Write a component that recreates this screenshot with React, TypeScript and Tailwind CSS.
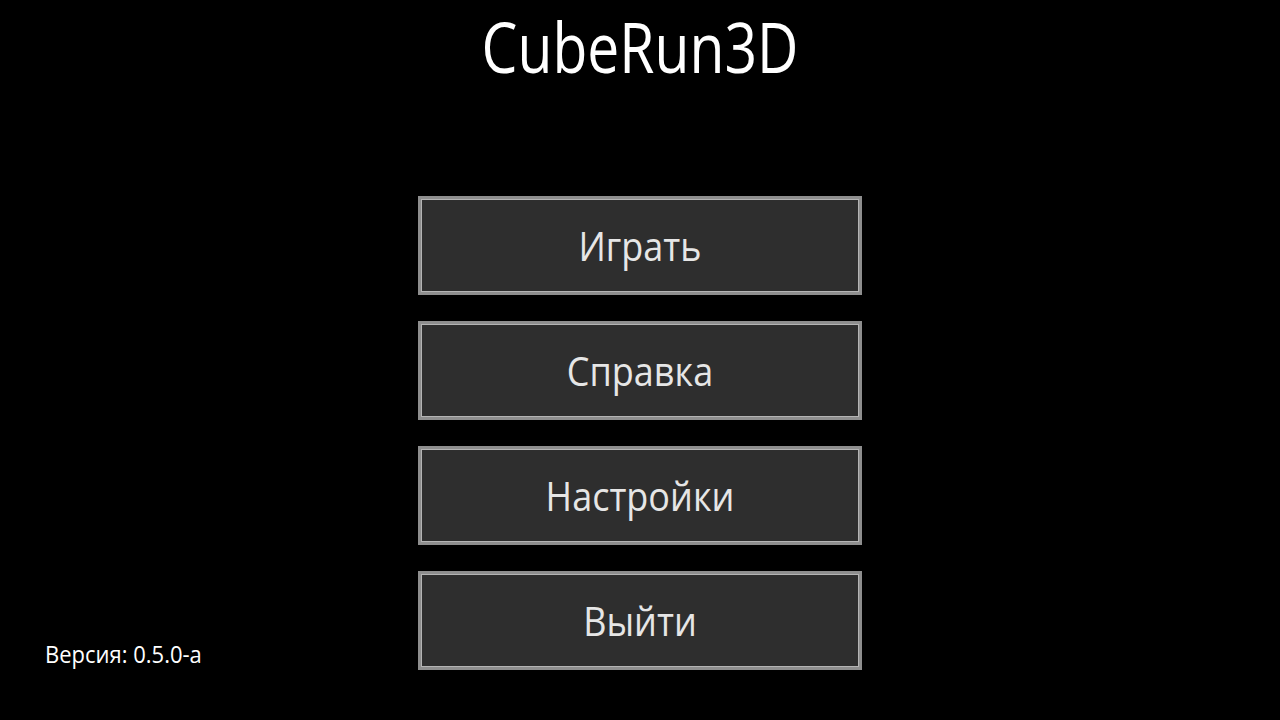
import React from "react";

const labels = ["Играть", "Справка", "Настройки", "Выйти"];

export default function App() {
  return (
    <div
      className="w-[1280px] h-[720px] bg-black flex flex-col items-center overflow-hidden"
      style={{ fontFamily: '"Open Sans", "Noto Sans", sans-serif' }}
    >
      <h1 className="text-white text-[57px] leading-[78px] mt-[7px] h-[78px] scale-y-[1.23]">
        CubeRun3D
      </h1>
      <div className="flex w-full mt-[111px]">
        <div className="w-[418px] flex items-end pl-[45px] pb-[2px]">
          <span className="inline-block text-white text-[22px] leading-[30px] scale-y-[1.08]">
            Версия: 0.5.0-а
          </span>
        </div>
        <div className="w-[444px] flex flex-col gap-[26px]">
          {labels.map((l) => (
            <div
              key={l}
              className="h-[99px] bg-[#2e2e2e] border-[3px] border-[#8e8e8e] shadow-[inset_0_0_0_1px_#b4b4b4] flex items-center justify-center text-[#e6e6e6] text-[36px]"
            >
              <span className="inline-block scale-y-[1.12]">{l}</span>
            </div>
          ))}
        </div>
      </div>
    </div>
  );
}
